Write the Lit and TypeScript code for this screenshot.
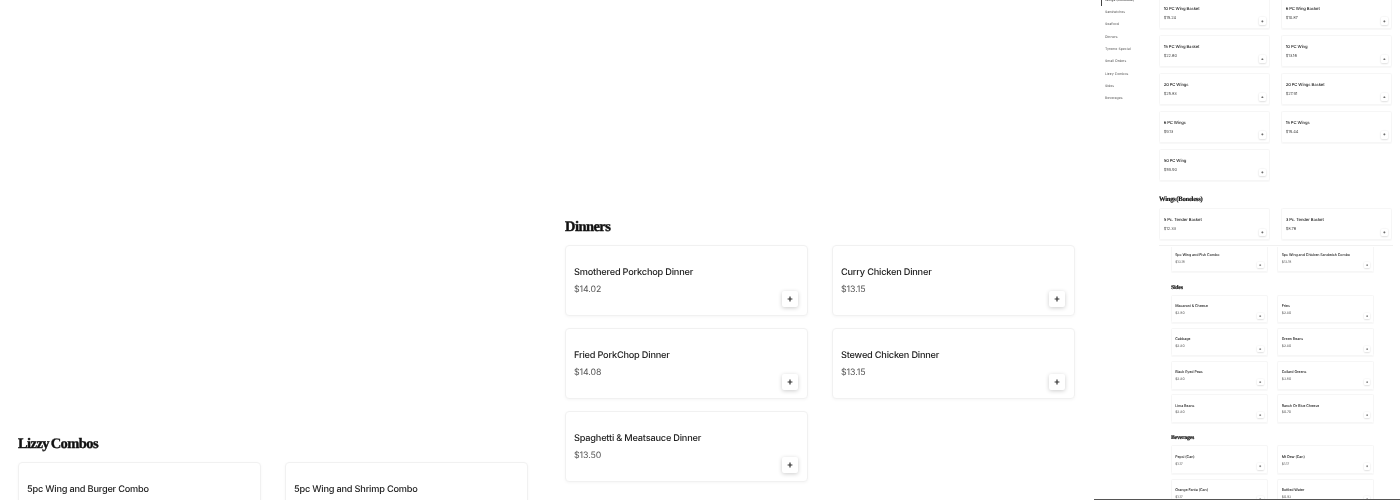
import { LitElement, html, css } from "lit";
import { customElement } from "lit/decorators.js";

type Item = { name: string; price: string };

const nav = ["Wings (Boneless)", "Sandwiches", "Seafood", "Dinners", "Tyreme Special", "Small Orders", "Lizzy Combos", "Sides", "Beverages"];

const wings: Item[] = [
  { name: "10 PC Wing Basket", price: "$15.24" },
  { name: "6 PC Wing Basket", price: "$10.87" },
  { name: "15 PC Wing Basket", price: "$22.60" },
  { name: "10 PC Wing", price: "$13.16" },
  { name: "20 PC Wings", price: "$25.83" },
  { name: "20 PC Wings Basket", price: "$27.91" },
  { name: "6 PC Wings", price: "$9.13" },
  { name: "15 PC Wings", price: "$19.44" },
  { name: "50 PC Wing", price: "$59.90" },
];
const boneless: Item[] = [
  { name: "5 Pc. Tender Basket", price: "$12.33" },
  { name: "3 Pc. Tender Basket", price: "$8.76" },
];
const dinners: Item[] = [
  { name: "Smothered Porkchop Dinner", price: "$14.02" },
  { name: "Curry Chicken Dinner", price: "$13.15" },
  { name: "Fried PorkChop Dinner", price: "$14.08" },
  { name: "Stewed Chicken Dinner", price: "$13.15" },
  { name: "Spaghetti & Meatsauce Dinner", price: "$13.50" },
];
const lizzy: Item[] = [
  { name: "5pc Wing and Burger Combo", price: "$13.15" },
  { name: "5pc Wing and Shrimp Combo", price: "$13.15" },
];
const combos: Item[] = [
  { name: "5pc Wing and Fish Combo", price: "$13.15" },
  { name: "5pc Wing and Chicken Sandwich Combo", price: "$13.15" },
];
const sides: Item[] = [
  { name: "Macaroni & Cheese", price: "$3.50" },
  { name: "Fries", price: "$2.80" },
  { name: "Cabbage", price: "$2.80" },
  { name: "Green Beans", price: "$2.80" },
  { name: "Black Eyed Peas", price: "$2.80" },
  { name: "Collard Greens", price: "$3.50" },
  { name: "Lima Beans", price: "$2.80" },
  { name: "Ranch Or Blue Cheese", price: "$0.70" },
];
const beverages: Item[] = [
  { name: "Pepsi (Can)", price: "$1.17" },
  { name: "Mt Dew (Can)", price: "$1.17" },
  { name: "Orange Fanta (Can)", price: "$1.17" },
  { name: "Bottled Water", price: "$0.93" },
];

@customElement("app-root")
export class AppRoot extends LitElement {
  static styles = css`
    :host {
      display: block;
      width: 1400px;
      height: 500px;
      overflow: hidden;
      background: #fff;
      font-family: "Inter", "Liberation Sans", sans-serif;
      color: #222;
      text-rendering: geometricPrecision;
    }

    .page {
      display: flex;
      height: 500px;
      overflow: hidden;
    }

    .left {
      width: 510px;
      margin-left: 18px;
      padding-top: 436px;
      flex: none;
      filter: blur(0.25px);
    }

    .middle {
      width: 510px;
      margin-left: 37px;
      padding-top: 219px;
      flex: none;
      filter: blur(0.25px);
    }

    .right {
      flex: none;
      width: 306px;
      margin-left: 19px;
      height: 499px;
      border-bottom: 1px solid #555;
      display: flex;
      overflow: hidden;
    }

    .sidenav {
      flex: none;
      width: 65px;
      margin-top: -6.5px;
      padding-left: 11px;
      box-sizing: border-box;
      filter: blur(0.25px);
    }

    .sidenav a {
      display: block;
      height: 12.35px;
      line-height: 12.35px;
      font-size: 3.5px;
      color: #555;
      white-space: nowrap;
    }

    .sidenav a.active {
      margin-left: -4px;
      padding-left: 3px;
      border-left: 1px solid #444;
      color: #222;
    }

    .content {
      flex: 1;
      min-width: 0;
      filter: blur(0.25px);
    }

    .upper {
      zoom: 0.457;
      width: 512px;
      height: 544.9px;
      box-sizing: border-box;
      margin-top: -6.6px;
      border-bottom: 1px solid #f1f1f1;
      overflow: hidden;
    }

    .lower {
      zoom: 0.399;
      width: 510px;
      margin: 2.5px 0 0 30px;
      overflow: hidden;
    }

    .lower-inner {
      margin-top: -7.6px;
    }

    h2 {
      margin: 0 0 10px;
      font-family: "Liberation Serif", serif;
      font-weight: 700;
      font-size: 14.5px;
      line-height: 16px;
      letter-spacing: -0.55px;
      word-spacing: -1.5px;
      color: #111;
      -webkit-text-stroke: 0.4px #111;
    }

    .grid {
      display: grid;
      grid-template-columns: 243px 243px;
      column-gap: 24px;
      row-gap: 12px;
      margin-bottom: 31px;
    }

    .upper .grid:first-child {
      margin-bottom: 33px;
    }

    .card {
      position: relative;
      height: 71px;
      box-sizing: border-box;
      padding: 20.5px 8px 0;
      background: #fff;
      border: 1px solid #f1f1f1;
      border-radius: 4px;
      box-shadow: 0 1px 3px rgba(0, 0, 0, 0.04);
    }

    .upper .card,
    .lower .card {
      border-color: #f6f6f6;
      box-shadow: 0 1px 2px rgba(0, 0, 0, 0.03);
    }

    .name {
      font-size: 9.2px;
      line-height: 12px;
      letter-spacing: -0.2px;
      font-weight: 500;
      color: #222;
      white-space: nowrap;
    }

    .price {
      margin-top: 5.5px;
      font-size: 8.8px;
      line-height: 12px;
      letter-spacing: -0.1px;
      color: #555;
    }

    .add {
      position: absolute;
      right: 9px;
      bottom: 8px;
      width: 16px;
      height: 16px;
      display: flex;
      align-items: center;
      justify-content: center;
      background: #fff;
      border-radius: 2px;
      box-shadow: 0 1px 4px rgba(0, 0, 0, 0.2);
    }

    .upper .add {
      right: 6px;
    }

    .lower .add {
      right: 8px;
    }

    .add svg {
      width: 6px;
      height: 6px;
      display: block;
    }
  `;

  private card(item: Item) {
    return html`
      <div class="card">
        <div class="name">${item.name}</div>
        <div class="price">${item.price}</div>
        <div class="add">
          <svg viewBox="0 0 10 10"><path d="M5 1v8M1 5h8" stroke="#333" stroke-width="2" fill="none" /></svg>
        </div>
      </div>
    `;
  }

  private section(title: string, items: Item[]) {
    return html`
      <h2>${title}</h2>
      <div class="grid">${items.map((i) => this.card(i))}</div>
    `;
  }

  render() {
    return html`
      <div class="page">
        <section class="left">${this.section("Lizzy Combos", lizzy)}</section>
        <section class="middle">${this.section("Dinners", dinners)}</section>
        <section class="right">
          <nav class="sidenav">
            ${nav.map((n, i) => html`<a class=${i === 0 ? "active" : ""}>${n}</a>`)}
          </nav>
          <div class="content">
            <div class="upper">
              <div class="grid">${wings.map((i) => this.card(i))}</div>
              ${this.section("Wings (Boneless)", boneless)}
            </div>
            <div class="lower">
              <div class="lower-inner">
                <div class="grid">${combos.map((i) => this.card(i))}</div>
                ${this.section("Sides", sides)}
                ${this.section("Beverages", beverages)}
              </div>
            </div>
          </div>
        </section>
      </div>
    `;
  }
}
